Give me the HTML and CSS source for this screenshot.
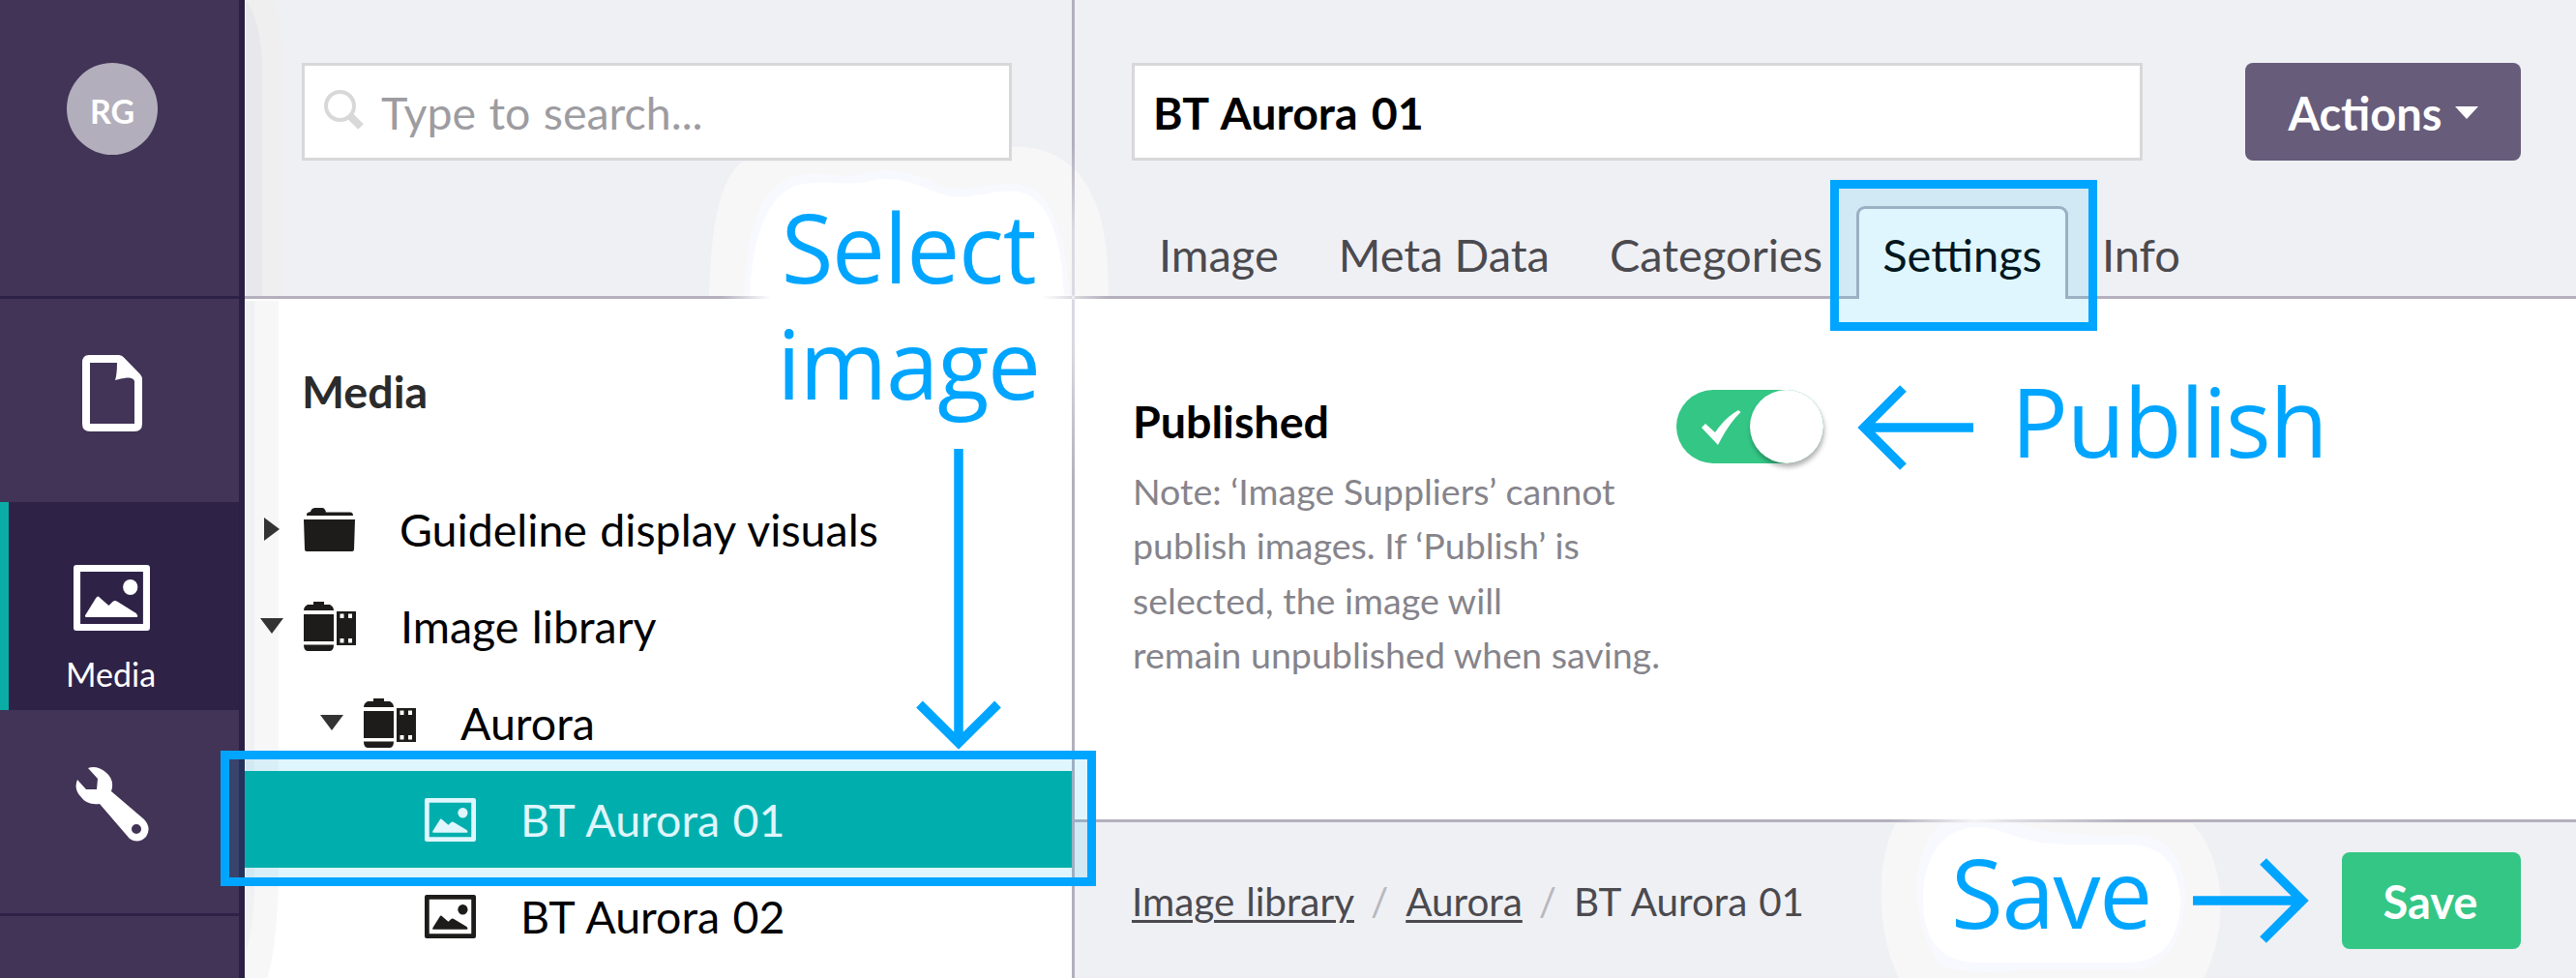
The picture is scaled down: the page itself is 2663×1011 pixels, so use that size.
FILE: index.html
```html
<!DOCTYPE html>
<html lang="en">
<head>
<meta charset="utf-8">
<title>Media</title>
<link rel="stylesheet" href="styles.css">
</head>
<body>
<svg width="0" height="0" class="defs">
  <symbol id="i-image" viewBox="0 0 78 68" preserveAspectRatio="none">
    <path fill="currentColor" fill-rule="evenodd" d="M3 0H75Q78 0 78 3V65Q78 68 75 68H3Q0 68 0 65V3Q0 0 3 0ZM7 7V61H71V7Z"/>
    <ellipse cx="58" cy="23" rx="7.5" ry="8" fill="currentColor"/>
    <path fill="currentColor" d="M12 52 23 34Q25 31 27 34L36 42 40 38Q42 36 45 38L64 50Q67 54 64 54H14Q11 54 12 52Z"/>
  </symbol>
  <symbol id="i-film" viewBox="0 0 54 51">
    <path fill="currentColor" d="M10 0H21V3H27Q31 5 31 9H0Q0 5 4 3H10ZM0 13H31V41H0ZM0 44.500H31Q31 51 27 51H4Q0 51 0 44.500Z"/>
    <path fill="currentColor" fill-rule="evenodd" d="M34 10H54V45H34ZM37.500 12.500V17H41.500V12.500ZM46 12.500V17H50V12.500ZM37.500 38V42.500H41.500V38ZM46 38V42.500H50V38Z"/>
  </symbol>
</svg>
<div class="app">
  <nav class="rail">
    <div class="rail-user"><span class="avatar">RG</span></div>
    <a class="rail-item">
      <svg width="62" height="79" viewBox="0 0 62 79"><path fill="#fff" fill-rule="evenodd" d="M7 0H38Q41 0 43 2.500L60 20Q62 22 62 26V71Q62 79 54 79H8Q0 79 0 71V8Q0 0 7 0ZM8 8V71H54V27Q53 23 46 23.500Q40 24 34 26Q36 20 36 8Z"/></svg>
    </a>
    <a class="rail-item rail-active">
      <svg width="79" height="68"><use href="#i-image"/></svg>
      <span class="rail-label">Media</span>
    </a>
    <a class="rail-item rail-tools">
      <svg width="76" height="77" viewBox="0 0 76 77"><path fill="#fff" fill-rule="evenodd" d="M13 1Q22-2 31 5Q41 13 37 25L71 54Q79 63 73 72Q65 80 56 74L25 38Q12 40 5 30Q-2 22 2 13L11 23H22L23 12ZM63 59A5 5 0 1 0 63 69A5 5 0 1 0 63 59Z"/></svg>
    </a>
    <div class="rail-rest"></div>
  </nav>

  <section class="library">
    <header class="bar library-bar">
      <div class="search">
        <svg width="42" height="42" viewBox="0 0 42 42"><circle cx="16.500" cy="16.500" r="14.500" fill="none" stroke="#d8d8d8" stroke-width="4"/><path d="M27 27 38 38" stroke="#d8d8d8" stroke-width="8"/></svg>
        <span>Type to search...</span>
      </div>
    </header>
    <div class="library-body">
      <h2>Media</h2>
      <ul class="tree">
        <li class="row"><span class="caret right"></span><svg class="icon" width="53" height="45" viewBox="0 0 53 45"><path fill="#1d1c1a" d="M3 7Q3 4.500 7 4Q8 0 12 0H19Q22 0 23 4.500H48Q51 4.500 51 8H3ZM0 12H53L52 43Q52 45 50 45H3Q1 45 1 43Z"/></svg><span>Guideline display visuals</span></li>
        <li class="row"><span class="caret"></span><svg class="icon" width="54" height="51"><use href="#i-film"/></svg><span>Image library</span></li>
        <li class="row lvl1"><span class="caret"></span><svg class="icon" width="54" height="51"><use href="#i-film"/></svg><span>Aurora</span></li>
        <li class="row lvl2 selected"><svg class="icon" width="53" height="45"><use href="#i-image"/></svg><span>BT Aurora 01</span></li>
        <li class="row lvl2"><svg class="icon" width="53" height="45"><use href="#i-image"/></svg><span>BT Aurora 02</span></li>
      </ul>
    </div>
  </section>

  <main class="editor">
    <header class="bar editor-bar">
      <div class="title-row">
        <div class="title-input">BT Aurora 01</div>
        <button class="actions"><span>Actions</span><i></i></button>
      </div>
      <div class="tabs">
        <a class="tab">Image</a>
        <a class="tab">Meta Data</a>
        <a class="tab">Categories</a>
        <a class="tab current">Settings</a>
        <a class="tab">Info</a>
      </div>
    </header>
    <div class="panel">
      <div class="field">
        <h3>Published</h3>
        <p>Note: ‘Image Suppliers’ cannot<br>publish images. If ‘Publish’ is<br>selected, the image will<br>remain unpublished when saving.</p>
      </div>
      <div class="toggle">
        <svg width="41" height="36" viewBox="0 0 41 36"><path fill="#fff" d="M0 18 4 14 14 23Q24 8 38 0L40.500 2Q28 14 17 36Z"/></svg>
        <span class="knob"></span>
      </div>
    </div>
    <footer class="foot">
      <div class="crumbs"><a>Image library</a><i>/</i><a>Aurora</a><i>/</i><span>BT Aurora 01</span></div>
      <button class="save">Save</button>
    </footer>
  </main>

  <svg class="overlay under" width="2663" height="1011" viewBox="0 0 2663 1011">
    <defs>
      <linearGradient id="vfade" gradientUnits="userSpaceOnUse" x1="0" y1="150" x2="0" y2="500">
        <stop offset="0" stop-color="#b3afbd"/><stop offset=".25" stop-color="#dcd9e3"/><stop offset=".6" stop-color="#dcd9e3"/><stop offset="1" stop-color="#b3afbd"/>
      </linearGradient>
      <linearGradient id="hfade" gradientUnits="userSpaceOnUse" x1="745" y1="0" x2="1145" y2="0">
        <stop offset="0" stop-color="#fff" stop-opacity="0"/><stop offset=".13" stop-color="#fff"/><stop offset=".83" stop-color="#fff"/><stop offset="1" stop-color="#fff" stop-opacity="0"/>
      </linearGradient>
      <linearGradient id="sfade" gradientUnits="userSpaceOnUse" x1="1955" y1="0" x2="2200" y2="0">
        <stop offset="0" stop-color="#fff" stop-opacity="0"/><stop offset=".35" stop-color="#fff" stop-opacity=".85"/><stop offset=".5" stop-color="#fff" stop-opacity=".6"/><stop offset="1" stop-color="#fff" stop-opacity="0"/>
      </linearGradient>
    </defs>
    <path fill="#efefef" d="M254 0H284Q292 25 293 60V306H254Z"/>
    <path fill="#e8e8ec" d="M254 0Q269 20 271 65V306H254Z"/>
    <path fill="#f7f7f8" d="M254 311H288V917Q285 985 276 1011H254Z"/>
    <path fill="#f0f1f3" d="M254 311H263V917Q262 960 254 985Z"/>
    <path fill="#f7f7f7" d="M733 306C735 230 745 185 767 167H1046V152Q1085 150 1112 176C1136 205 1145 235 1146 306Z"/>
    <path fill="#f8f9ff" d="M769 306C773 235 785 190 825 181C850 175 870 186 890 180C925 170 950 182 975 192C1000 202 1020 188 1050 190C1085 192 1103 240 1105 306Z"/>
    <path fill="#fff" d="M775 306C778 240 795 197 830 190C860 186 880 193 900 187C930 180 950 193 975 201C1000 209 1025 195 1052 198C1085 205 1097 245 1100 306Z"/>
    <path stroke="url(#vfade)" stroke-width="3" d="M1109.500 150L1109.600 500"/>
    <path stroke="url(#hfade)" stroke-width="4" d="M745 307.500L1145 307.600"/>
    <path fill="#f7f7f7" d="M1960 851C1938 890 1940 965 1963 1011H2278C2304 960 2302 890 2266 851Z"/>
    <path fill="#f8f9ff" d="M2007 851C1972 880 1975 960 2007 998Q2025 1008 2090 1003H2200C2240 1003 2258 970 2259 925C2258 885 2240 862 2200 863Q2130 866 2085 851Z"/>
    <path fill="#fff" d="M1988 930C1988 890 2005 855 2045 855C2075 856 2085 873 2140 873H2200C2235 873 2252 895 2254 930C2254 970 2235 995 2200 995H2045C2005 995 1988 970 1988 930Z"/>
    <path stroke="url(#sfade)" stroke-width="4" d="M1955 848.500L2200 848.600"/>
  </svg>

  <div class="overlay">
    <div class="frame frame-row"></div>
    <div class="frame frame-tab"></div>
    <div class="note note-select">Select<br>image</div>
    <div class="note note-publish">Publish</div>
    <div class="note note-save">Save</div>
    <svg class="arrows" width="2663" height="1011" viewBox="0 0 2663 1011" fill="none" stroke="#00a5ff" stroke-width="9.500">
      <path d="M991 464V765M950.500 728 991 768 1031.500 728"/>
      <path d="M2040 442H1930M1967.500 401.500 1927 442 1967.500 482.500"/>
      <path d="M2267 931H2378M2339.500 890.500 2380 931 2339.500 971.500"/>
    </svg>
  </div>
</div>
</body>
</html>
```
FILE: styles.css
```css
* { box-sizing: border-box; }
body { margin: 0; font-family: Lato, "Open Sans", sans-serif; color: #000; background: #fff; }
h2, h3, p, ul { margin: 0; padding: 0; }
ul { list-style: none; }
i { font-style: normal; }
svg { display: block; flex: none; }
.defs { position: absolute; }
button { border: 0; padding: 0; font: inherit; color: #fff; }

.app { position: relative; display: grid; grid-template-columns: 253px 858px 1fr; width: 2663px; height: 1011px; overflow: hidden; font-size: 46.5px; word-spacing: 1.5px; }

.rail { display: flex; flex-direction: column; background: #413457; border-right: 6px solid #2b1f45; color: #fff; }
.rail-user { height: 309px; padding: 65px 0 0 69px; border-bottom: 3px solid #2e2148; }
.avatar { display: flex; align-items: center; justify-content: center; width: 94px; height: 95px; border-radius: 50%; background: #b3aebc; font-size: 34px; font-weight: 700; padding-top: 4px; }
.rail-item { display: flex; flex-direction: column; height: 210px; padding: 58px 0 0 85px; }
.rail-active { height: 215px; padding: 65px 0 0 76px; background: #2f2247; box-shadow: inset 9px 0 #0aada5; }
.rail-label { font-size: 34px; line-height: 40px; margin: 25px 0 0 -8px; }
.rail-tools { padding: 59px 0 0 78px; height: 213px; border-bottom: 3px solid #2e2148; }
.rail-rest { flex: 1; }

.library { border-right: 3px solid #b3afbd; display: flex; flex-direction: column; }
.bar { height: 309px; background: #eff0f4; border-bottom: 3px solid #b3afbd; }
.library-bar { padding: 65px 0 0 59px; }
.search { position: relative; z-index: 2; display: flex; width: 734px; height: 101px; background: #fff; border: 3px solid #d8d7d9; padding: 25px 0 0 20px; gap: 17px; color: #9d9ca1; line-height: 47px; }
.library-body { padding-top: 65px; }
h2 { font-size: 46.6px; line-height: 60px; padding-left: 59px; margin-bottom: 63px; color: #2b2b2b; }
.tree { position: relative; z-index: 2; }
.row { display: flex; align-items: center; height: 100px; padding-left: 16px; color: #000; }
.row .icon { color: #1d1c1a; margin-right: 46px; }
.row .caret { width: 24px; margin-right: 21px; border: 12px solid transparent; border-top: 16px solid #333; border-bottom: 0; }
.row .caret.right { border: 12px solid transparent; border-left: 16px solid #333; border-right: 0; width: 16px; margin: 0 25px 0 4px; }
.row.lvl1 { padding-left: 78px; }
.row.lvl2 { padding-left: 186px; }
.row.selected { background: #00aea3; color: #fff; }
.row.selected .icon { color: #fff; }

.editor { display: flex; flex-direction: column; min-width: 0; }
.editor-bar { display: flex; flex-direction: column; padding: 65px 57px 0 59px; }
.title-row { display: flex; justify-content: space-between; }
.title-input { width: 1045px; height: 101px; background: #fff; border: 3px solid #d8d7d9; padding: 0 0 0 19px; font-weight: 700; line-height: 97px; word-spacing: 3px; }
.actions { display: flex; align-items: center; justify-content: center; gap: 13px; width: 285px; height: 101px; border-radius: 8px; background: #675c7a; font-size: 47px; font-weight: 700; padding-top: 2px; }
.actions i { border: 12px solid transparent; border-top: 13px solid #fff; border-bottom: 0; }
.tabs { display: flex; gap: 8px; margin: 47px 0 0 1px; font-size: 47px; word-spacing: 0; }
.tab { height: 96px; flex: none; padding: 2px 24px 0; border: 3px solid transparent; line-height: 90px; color: #4b4a4f; }
.tab.current { background: #fff; border-color: #b3afbd; border-bottom: 0; border-radius: 9px 9px 0 0; color: #000; }
.panel { display: flex; height: 538px; padding: 98px 0 0 60px; }
.field { width: 562px; flex: none; }
h3 { font-size: 46.6px; line-height: 56px; margin-bottom: 17px; }
p { font-size: 37.6px; line-height: 56.3px; word-spacing: 0; color: #86848b; white-space: nowrap; }
.toggle { display: flex; justify-content: space-between; width: 152px; height: 76px; margin-top: -4px; border-radius: 38px; background: #34c685; padding-left: 26px; }
.toggle svg { margin-top: 21px; }
.knob { width: 76px; height: 76px; border-radius: 50%; background: #fff; box-shadow: 1px 4px 5px rgba(0,0,0,.3); }
.foot { display: flex; justify-content: space-between; height: 164px; padding: 31px 57px 0 59px; border-top: 3px solid #b3afbd; background: #eff0f4; }
.crumbs { display: flex; font-size: 40.4px; line-height: 101px; color: #4b4a4f; }
.crumbs a { text-decoration: underline; text-decoration-thickness: 3px; text-underline-offset: 4px; }
.crumbs i { color: #b9b7bd; margin: 0 18px 0 17px; }
.save { position: relative; z-index: 2; width: 185px; height: 100px; border-radius: 8px; background: #34c685; font-size: 47px; font-weight: 700; padding: 2px 2px 0 0; }

.overlay { position: absolute; left: 0; top: 0; width: 2663px; height: 1011px; z-index: 3; }
.overlay.under { z-index: 1; }
.arrows { position: absolute; left: 0; top: 0; }
.frame { position: absolute; border: 9.5px solid #00a5ff; background: rgba(0,185,245,.125); }
.frame-row { left: 228px; top: 776px; width: 905px; height: 140px; }
.frame-tab { left: 1892px; top: 186px; width: 276px; height: 156px; }
.note { position: absolute; font-family: "Open Sans", sans-serif; font-size: 98px; letter-spacing: -1.3px; line-height: 120px; color: #00a5ff; white-space: nowrap; }
.note-select { left: 800px; top: 195px; width: 278px; text-align: center; }
.note-publish { left: 2079px; top: 375px; }
.note-save { left: 2017px; top: 862px; }
```
